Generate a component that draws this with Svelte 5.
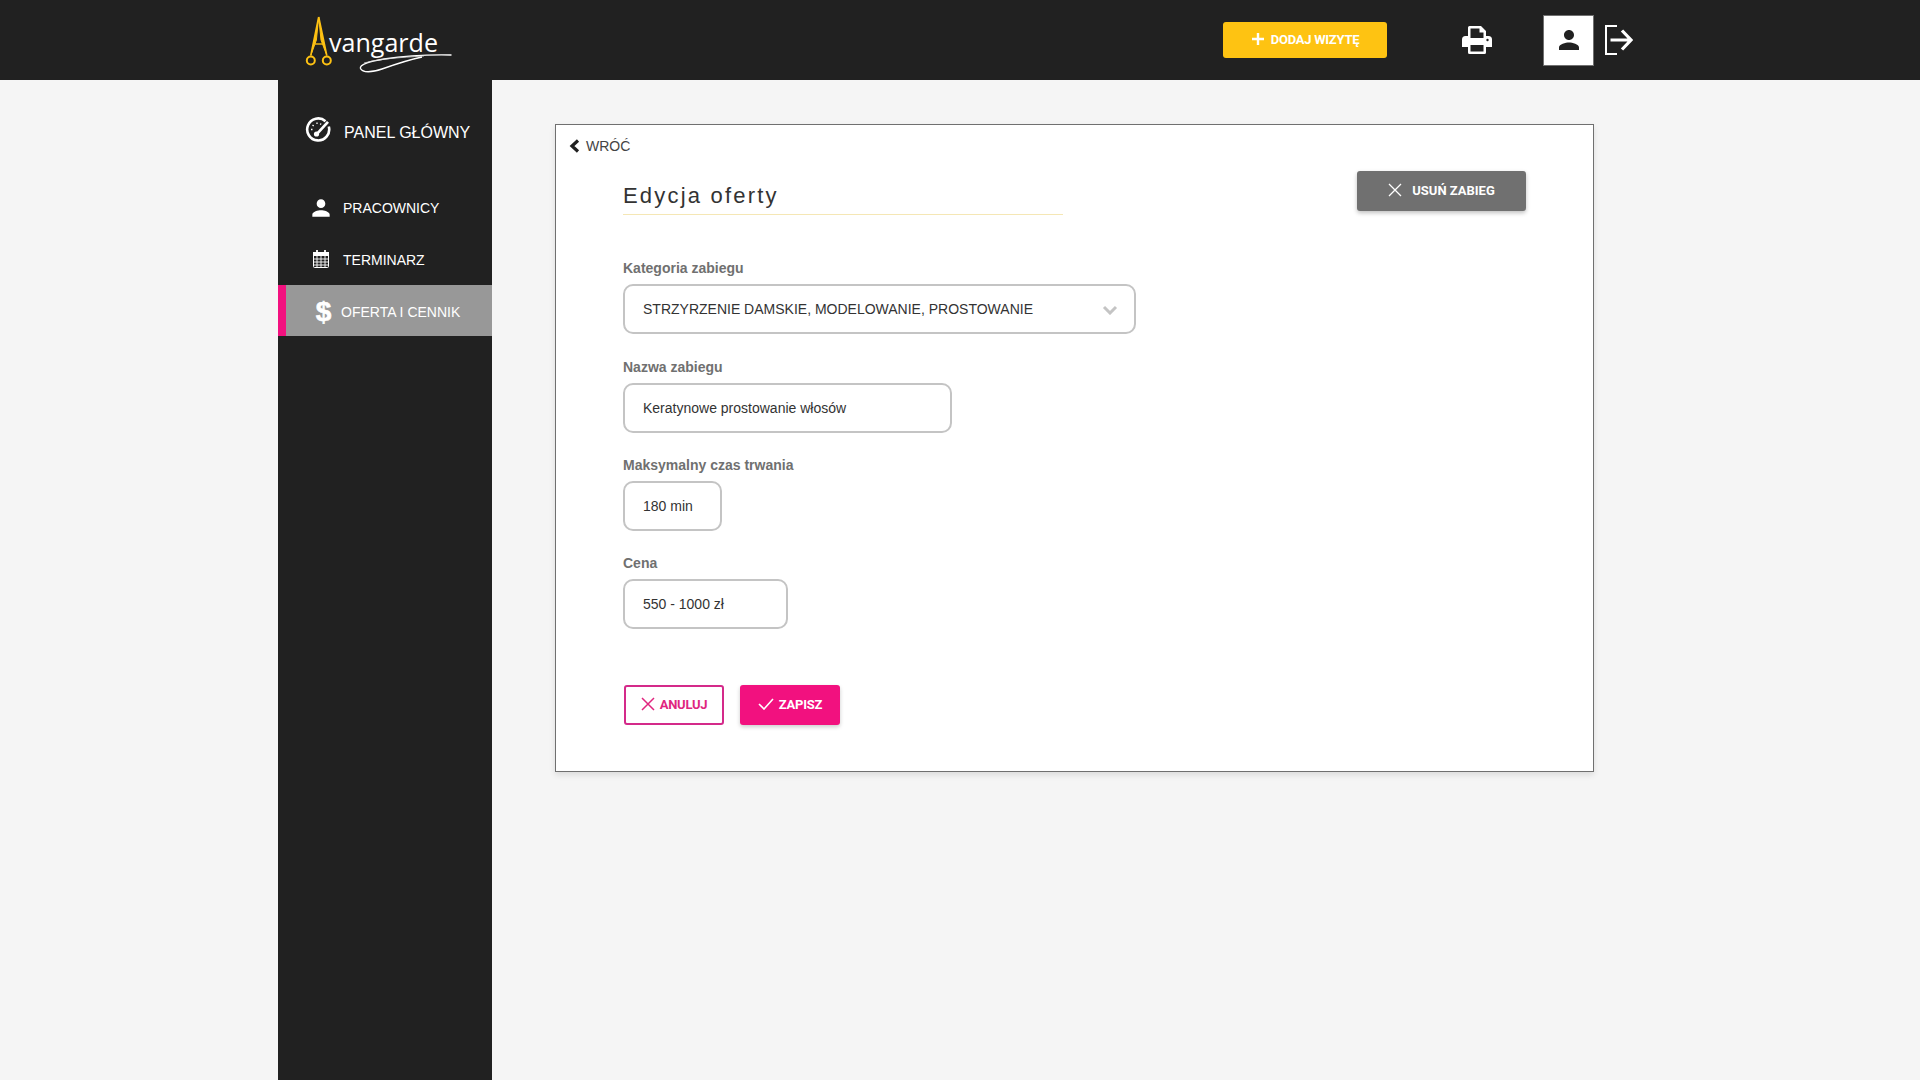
<script>
  const fields = [
    { label: 'Nazwa zabiegu', value: 'Keratynowe prostowanie włosów', width: 329 },
    { label: 'Maksymalny czas trwania', value: '180 min', width: 99 },
    { label: 'Cena', value: '550 - 1000 zł', width: 165 }
  ];
</script>

<div class="page">
  <header class="topbar">
    <a class="logo" href="#top" aria-label="Avangarde">
      <svg width="150" height="60" viewBox="0 0 150 60">
        <g fill="none" stroke="#fdc113" stroke-width="1.6">
          <path d="M14.7 1 L6.8 39.5 M14.7 1 L22.8 39.5" />
          <path d="M14.7 1 L12.4 24 L6.8 39.5 M14.7 1 L17 24 L22.8 39.5" fill="#fdc113" stroke-width="1" />
          <path d="M10.8 28 H18.8" stroke-width="1.4" />
          <circle cx="6.8" cy="44.5" r="4" stroke-width="2" />
          <circle cx="22.8" cy="44.5" r="4" stroke-width="2" />
        </g>
        <text x="25" y="36" class="logo-text" textLength="109" lengthAdjust="spacingAndGlyphs">vangarde</text>
        <path d="M147.5 39 C125 38.500 100 40 80 43 C68 45 55 48 56.500 52.500 C58.500 57 68 56.500 78 53 C92 48 104 44 118 41" fill="none" stroke="#fff" stroke-width="1.400" />
        <path d="M60 47 C75 43 95 41.500 120 40" fill="none" stroke="#ddd" stroke-width=".8" />
      </svg>
    </a>

    <button class="btn btn-add">
      <svg width="14" height="14" viewBox="0 0 14 14"><path d="M7 1v12M1 7h12" stroke="#fff" stroke-width="2.400" fill="none" /></svg>
      DODAJ WIZYTĘ
    </button>

    <svg class="print-icon" width="30" height="28" viewBox="0 0 30 28" aria-hidden="true">
      <path fill="#fff" fill-rule="evenodd" d="M6 1.500A1.500 1.500 0 0 1 7.500 0H19l5 5v5h2.500A3.500 3.500 0 0 1 30 13.500V21h-6v5.500a1.500 1.500 0 0 1-1.500 1.500H7.500A1.500 1.500 0 0 1 6 26.500V21H0v-7.500A3.500 3.500 0 0 1 3.500 10H6ZM8.500 2.500V12h13V6.500h-4v-4ZM8.500 19v6.500h13V19Z" />
      <circle cx="25.500" cy="14" r="1.200" fill="#212121" />
    </svg>

    <div class="user-box">
      <svg width="30" height="30" viewBox="0 0 24 24"><path fill="#212121" d="M12 12c2.210 0 4-1.790 4-4s-1.790-4-4-4-4 1.790-4 4 1.790 4 4 4zm0 2c-2.670 0-8 1.340-8 4v2h16v-2c0-2.660-5.330-4-8-4z" /></svg>
    </div>

    <svg class="exit-icon" width="28" height="30" viewBox="0 0 28 30" aria-hidden="true">
      <path d="M12 1H1v28h11" fill="none" stroke="#fff" stroke-width="2" />
      <path d="M5.500 15H25M17 5.500 26 15l-9 9.500" fill="none" stroke="#fff" stroke-width="3.200" />
    </svg>
  </header>

  <div class="shell">
    <nav class="sidebar">
      <div class="nav-main">
        <svg class="gauge" width="26" height="26" viewBox="0 0 26 26" aria-hidden="true">
          <path d="M20.500 5.200A11 11 0 1 0 23.800 10.500" fill="none" stroke="#fff" stroke-width="2.600" />
          <path d="M10.500 17.500 22 5l2 1.800-11.500 12.500a2.500 2.500 0 0 1-2-1.800Z" fill="#fff" />
          <circle cx="11.500" cy="18" r="2.600" fill="#fff" />
          <path d="M6 13.500h1.500M7.500 9l1.200 1M12 6.500v1.500M16 7.500l-.7 1.200" stroke="#fff" stroke-width="1.300" fill="none" />
        </svg>
        <span>PANEL GŁÓWNY</span>
      </div>

      <a class="nav-item" href="#top">
        <svg width="26" height="26" viewBox="0 0 24 24"><path fill="#fff" d="M12 12c2.210 0 4-1.790 4-4s-1.790-4-4-4-4 1.790-4 4 1.790 4 4 4zm0 2c-2.670 0-8 1.340-8 4v2h16v-2c0-2.660-5.330-4-8-4z" /></svg>
        PRACOWNICY
      </a>
      <a class="nav-item" href="#top">
        <svg class="cal" width="22" height="18" viewBox="0 0 22 18">
          <rect x="3.500" y="2.500" width="15" height="15" rx="1" fill="none" stroke="#fff" />
          <path d="M3 2h16v4H3z" fill="#fff" />
          <path d="M3.500 9h15M3.500 12h15M3.500 15h15M7 6v11M11 6v11M15 6v11" stroke="#fff" stroke-width=".9" />
          <path d="M7 0v3M15 0v3" stroke="#fff" stroke-width="1.800" />
        </svg>
        TERMINARZ
      </a>
      <a class="nav-item active" href="#top">
        <span class="dollar">$</span>
        OFERTA I CENNIK
      </a>
    </nav>

    <main class="content">
      <section class="card">
        <a class="back" href="#top">
          <svg width="11" height="14" viewBox="0 0 11 14"><path d="M9 1.500 3 7l6 5.500" fill="none" stroke="#212121" stroke-width="3.200" /></svg>
          WRÓĆ
        </a>

        <div class="body">
          <div class="head">
            <h1>Edycja oferty</h1>
            <button class="btn btn-del">
              <svg width="14" height="14" viewBox="0 0 14 14"><path d="M1 1l12 12M13 1 1 13" stroke="#fff" stroke-width="1.300" fill="none" /></svg>
              USUŃ ZABIEG
            </button>
          </div>

          <div class="field first">
            <span class="label">Kategoria zabiegu</span>
            <div class="input select">
              STRZYRZENIE DAMSKIE, MODELOWANIE, PROSTOWANIE
              <svg class="chev" width="16" height="10" viewBox="0 0 16 10"><path d="M2 2l6 6 6-6" fill="none" stroke="#c4c4c4" stroke-width="3" /></svg>
            </div>
          </div>

          {#each fields as f}
            <div class="field">
              <span class="label">{f.label}</span>
              <div class="input" style="width: {f.width}px">{f.value}</div>
            </div>
          {/each}

          <div class="actions">
            <button class="btn btn-cancel">
              <svg width="14" height="14" viewBox="0 0 14 14"><path d="M1 1l12 12M13 1 1 13" stroke="#e0267f" stroke-width="1.500" fill="none" /></svg>
              ANULUJ
            </button>
            <button class="btn btn-save">
              <svg width="16" height="12" viewBox="0 0 16 12"><path d="M1 6l5 5L15 1" stroke="#fff" stroke-width="1.600" fill="none" /></svg>
              ZAPISZ
            </button>
          </div>
        </div>
      </section>
    </main>
  </div>
</div>

<style>
  :global(body) {
    margin: 0;
    background: #f5f5f5;
    font-family: "Liberation Sans", Arial, sans-serif;
  }

  .page {
    min-height: 1080px;
    display: flex;
    flex-direction: column;
  }

  .topbar {
    height: 80px;
    background: #212121;
    display: flex;
    align-items: center;
    padding-left: 304px;
    box-sizing: border-box;
  }

  .logo {
    display: block;
    height: 60px;
    align-self: flex-start;
    margin-top: 16px;
  }

  .logo-text {
    font-family: "Open Sans", sans-serif;
    font-size: 26px;
    fill: #fff;
  }

  .btn {
    display: flex;
    align-items: center;
    justify-content: center;
    border: 0;
    border-radius: 3px;
    height: 40px;
    box-sizing: border-box;
    font-family: Roboto, sans-serif;
    font-weight: 700;
    font-size: 13px;
    letter-spacing: -0.25px;
    color: #fff;
    padding: 0 0 2px;
  }

  .btn-add {
    width: 164px;
    height: 36px;
    margin-left: 769px;
    background: #fec312;
    gap: 6px;
  }

  .print-icon { margin-left: 75px; }

  .user-box {
    width: 51px;
    height: 51px;
    box-sizing: border-box;
    margin-left: 51px;
    background: #fff;
    border: 1px solid #707070;
    display: flex;
    align-items: center;
    justify-content: center;
  }

  .exit-icon { margin-left: 11px; }

  .shell {
    flex: 1;
    display: flex;
    padding-left: 278px;
  }

  .sidebar {
    width: 214px;
    background: #212121;
    color: #fff;
    flex-shrink: 0;
  }

  .nav-main {
    height: 102px;
    box-sizing: border-box;
    padding: 36px 0 0 27px;
    display: flex;
    align-items: flex-start;
    gap: 13px;
    font-size: 16px;
    line-height: 34px;
  }

  .nav-item {
    height: 52px;
    display: flex;
    align-items: center;
    padding-left: 30px;
    gap: 9px;
    font-size: 14px;
    color: #fff;
    text-decoration: none;
    box-sizing: border-box;
  }

  .nav-item svg { flex-shrink: 0; }

  .cal {
    margin: 0 2px 2px;
  }

  .nav-item.active {
    height: 51px;
    margin-top: -1px;
    background: #989898;
    border-left: 8px solid #f2117f;
    padding: 2px 0 0 29px;
    gap: 9px;
  }

  .dollar {
    width: 17px;
    font-weight: 700;
    font-size: 28px;
    line-height: 1;
    text-align: center;
    -webkit-text-stroke: 0.6px #fff;
  }

  .content {
    flex: 1;
    padding: 44px 0 0 63px;
  }

  .card {
    width: 1039px;
    box-sizing: border-box;
    background: #fff;
    border: 1px solid #707070;
    padding: 11px 0 46px;
    box-shadow: 0 3px 6px rgba(0, 0, 0, 0.1);
  }

  .back {
    display: flex;
    align-items: center;
    height: 20px;
    gap: 6px;
    padding-left: 13px;
    font-size: 14px;
    color: #444;
    text-decoration: none;
  }

  .body {
    padding: 15px 67px 0;
  }

  .head {
    display: flex;
    justify-content: space-between;
    align-items: flex-start;
  }

  h1 {
    width: 440px;
    height: 44px;
    margin: 0;
    box-sizing: border-box;
    padding-top: 12px;
    font-size: 22px;
    line-height: 26px;
    font-weight: 400;
    letter-spacing: 2.2px;
    color: #333;
    border-bottom: 1px solid #f5e7b5;
  }

  .btn-del {
    width: 169px;
    background: #707070;
    gap: 10px;
    letter-spacing: 0;
    box-shadow: 0 2px 4px rgba(0, 0, 0, 0.25);
  }

  .field {
    margin-top: 22px;
  }

  .field.first {
    margin-top: 43px;
    margin-bottom: 23px;
  }

  .label {
    display: block;
    height: 20px;
    line-height: 20px;
    margin-bottom: 6px;
    font-size: 14px;
    font-weight: 700;
    color: #707070;
  }

  .input {
    height: 50px;
    box-sizing: border-box;
    border: 2px solid #c4c4c4;
    border-radius: 10px;
    padding: 0 18px;
    display: flex;
    align-items: center;
    font-size: 14px;
    color: #333;
    background: #fff;
  }

  .select {
    width: 513px;
    justify-content: space-between;
    padding-right: 16px;
  }

  .chev { margin-top: 2px; }

  .actions {
    display: flex;
    gap: 16px;
    margin-top: 56px;
    padding-left: 1px;
  }

  .btn-cancel {
    width: 100px;
    background: #fff;
    border: 2px solid #d42a8a;
    color: #e0267f;
    gap: 5px;
  }

  .btn-save {
    width: 100px;
    background: #f2117f;
    gap: 5px;
    box-shadow: 0 2px 4px rgba(0, 0, 0, 0.2);
  }
</style>
